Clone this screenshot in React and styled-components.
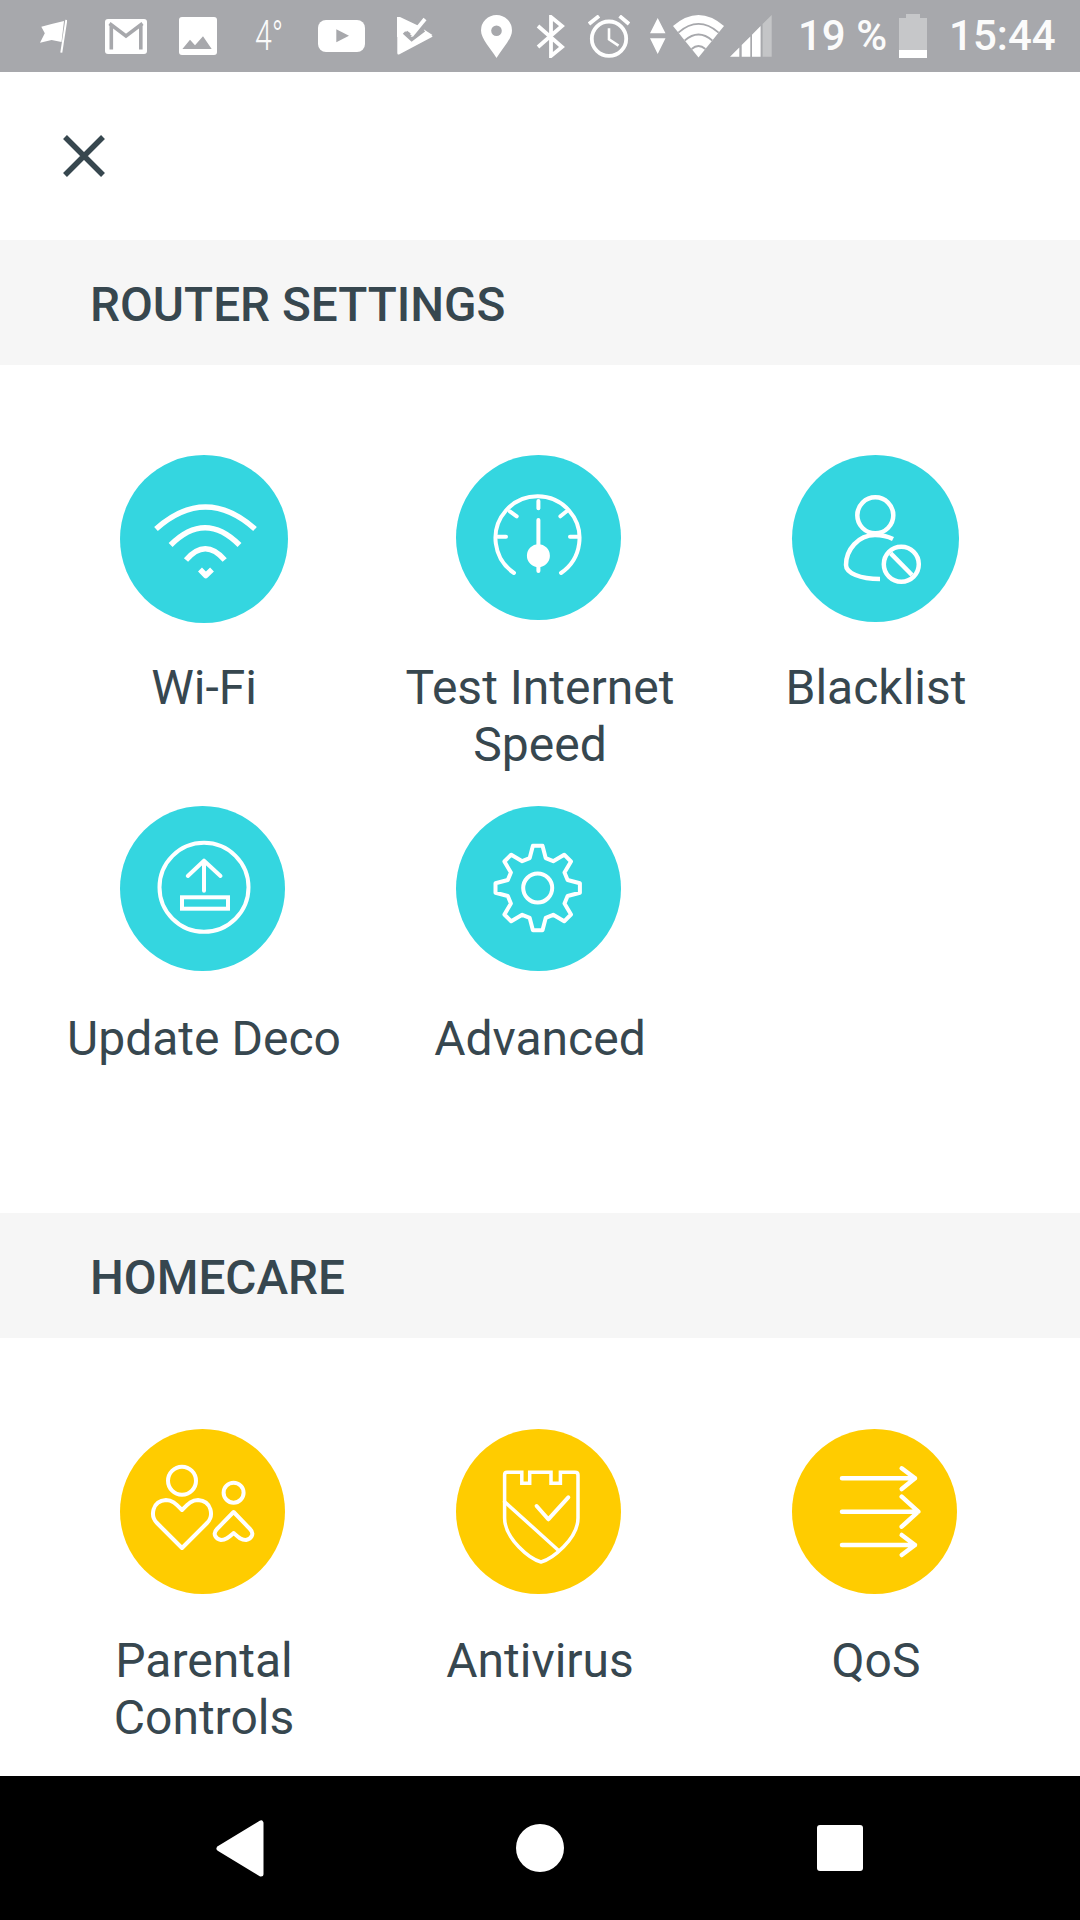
import React from "react";
import styled, { createGlobalStyle } from "styled-components";

const Global = createGlobalStyle`
  html, body { margin: 0; padding: 0; background: #fff; }
  body { font-family: Roboto, "Liberation Sans", sans-serif; }
`;

const Screen = styled.div`
  width: 1080px;
  height: 1920px;
  display: flex;
  flex-direction: column;
  overflow: hidden;
  background: #fff;
  color: #37474f;
`;

const StatusBar = styled.header`
  flex: none;
  height: 72px;
  background: #a7a8ac;
  display: flex;
  align-items: center;
  padding-left: 40px;
  color: #fbfbfb;
`;

const StatusIcon = styled.svg`
  flex: none;
  display: block;
  margin-left: ${(p) => p.$gap || 0}px;
`;

const StatusText = styled.span`
  flex: none;
  margin-left: ${(p) => p.$gap || 0}px;
  font-size: 42px;
  line-height: 72px;
  white-space: pre;
  font-weight: 500;
`;

const Weather = styled.span`
  flex: none;
  width: 28px;
  margin-left: 38px;
  font-size: 42px;
  line-height: 72px;
  font-weight: 300;
  white-space: pre;
  transform: scaleX(0.72);
  transform-origin: left center;
`;

const CloseRow = styled.div`
  flex: none;
  height: 168px;
  display: flex;
  align-items: center;
  padding-left: 63px;
  box-sizing: border-box;
`;

const Main = styled.main`
  flex: 1;
  min-height: 0;
  overflow: hidden;
`;

const SectionHeader = styled.h2`
  margin: 0;
  height: 125px;
  box-sizing: border-box;
  padding: 4px 0 0 90px;
  display: flex;
  align-items: center;
  background: #f6f6f6;
  font-size: 47.7px;
  font-weight: 500;
  color: #37474f;
`;

const Grid = styled.div`
  display: grid;
  grid-template-columns: repeat(3, 336px);
  grid-auto-rows: 351px;
  padding: ${(p) => p.$top}px 0 ${(p) => 146 - p.$top}px 36px;
`;

const Cell = styled.div`
  display: flex;
  flex-direction: column;
  align-items: center;
`;

const CircleSlot = styled.div`
  width: 168px;
  height: 168px;
`;

const Circle = styled.div`
  width: ${(p) => p.$size}px;
  height: ${(p) => p.$size}px;
  border-radius: 50%;
  background: ${(p) => p.$color};
`;

const Glyph = styled.svg`
  display: block;
  width: 100%;
  height: 100%;
  fill: none;
  stroke: #fff;
  stroke-width: 4;
  stroke-linecap: round;
  stroke-linejoin: round;
`;

const Label = styled.div`
  margin-top: ${(p) => p.$offset}px;
  text-align: center;
  font-size: 48px;
  line-height: 57px;
  color: #37474f;
  white-space: pre-line;
`;

const NavBar = styled.nav`
  flex: none;
  height: 144px;
  background: #000;
  display: grid;
  grid-template-columns: repeat(3, 1fr);
`;

const NavSlot = styled.div`
  display: flex;
  align-items: center;
  justify-content: ${(p) => p.$justify || "center"};
  padding: ${(p) => p.$padding || "0"};
`;

const NavHome = styled.div`
  width: 48px;
  height: 48px;
  border-radius: 50%;
  background: #fff;
`;

const NavSquare = styled.div`
  width: 46px;
  height: 46px;
  border-radius: 3px;
  background: #fff;
`;

const G = "#a7a8ac";

const gearPath = () => {
  const cx = 81.7, cy = 82;
  const pts = [];
  for (let i = 0; i < 8; i++) {
    const a = (i * Math.PI) / 4 - Math.PI / 2;
    const d = Math.PI / 180;
    [[31, -15], [42.5, -6.5], [42.5, 6.5], [31, 15]].forEach(([r, o]) => {
      pts.push([cx + r * Math.cos(a + o * d), cy + r * Math.sin(a + o * d)]);
    });
  }
  return "M" + pts.map((p) => p[0].toFixed(1) + " " + p[1].toFixed(1)).join("L") + "Z";
};

const WifiIcon = () => (
  <Glyph viewBox="0 0 168 168" style={{ strokeWidth: 5.5, strokeLinecap: "butt" }}>
    <path d="M36 74Q85.5 30 135 74" />
    <path d="M50.6 90Q85 55.4 119.5 90" />
    <path d="M66 105Q85.3 82.4 104.7 105" />
    <path d="M80 114.5L85.8 120.5L92 114.5" />
  </Glyph>
);

const SpeedIcon = () => (
  <Glyph viewBox="0 0 165 165">
    <path d="M58 118A42 42 0 1 1 105 118" />
    <path d="M82.4 46V53.3M42 81.7H50M114 81.7H122.6M53.8 56.3L60.7 61.3M110.6 56.3L104.4 61.3M82.4 65V116" />
    <circle cx="82.4" cy="100.7" r="9.5" fill="#fff" />
  </Glyph>
);

const BlacklistIcon = () => (
  <Glyph viewBox="0 0 167 167" style={{ strokeWidth: 4.5, strokeLinecap: "butt" }}>
    <circle cx="83.3" cy="60.3" r="18" />
    <path d="M101 84C95 81 89 80 83 80C66 80 54 95 54 110C54 118 68 124 88 124" />
    <circle cx="109.3" cy="109.3" r="17.5" />
    <path d="M98.7 98.3L120 120" />
  </Glyph>
);

const UpdateIcon = () => (
  <Glyph viewBox="0 0 165 165">
    <circle cx="84" cy="81.3" r="44.5" />
    <path d="M84 55.7V84.7M67.8 70L84 54.7L100.5 70" />
    <rect x="62" y="91.3" width="46" height="11.4" strokeLinejoin="miter" />
  </Glyph>
);

const GearIcon = () => (
  <Glyph viewBox="0 0 165 165">
    <path d={gearPath()} />
    <circle cx="81.7" cy="82" r="14.5" />
  </Glyph>
);

const ParentalIcon = () => (
  <Glyph viewBox="0 0 165 165">
    <circle cx="62" cy="51.7" r="14" />
    <path d="M62 119L37 94C30 87 32 72 46 71C52 71 55 74 62 81C69 74 72 71 78 71C92 72 94 87 87 94Z" />
    <circle cx="113.6" cy="63.7" r="10" />
    <path d="M113.6 83L130 100C135 105 131 110 126 111C121 111 118 108 113.6 104C109 108 106 111 101 111C96 110 92 105 97 100Z" />
  </Glyph>
);

const ShieldIcon = () => (
  <Glyph viewBox="0 0 165 165" style={{ strokeWidth: 3.5 }}>
    <path d="M51 43.3H65.8V54.3H73.7V43.3H95V54.3H104.4V43.3H119Q122 43.3 122 46V89C122 110 96 130 85 133C74 130 48.6 110 48.6 89V46Q48.6 43.3 51 43.3Z" strokeLinejoin="miter" />
    <path d="M48.6 72.7L102 121" />
    <path d="M80.6 77L92.3 90.3L112.3 68.3" strokeWidth="4" />
  </Glyph>
);

const QosIcon = () => (
  <Glyph viewBox="0 0 165 165" style={{ strokeWidth: 4.5 }}>
    <path d="M50 49.3H123M109.7 39.3L123 49.3L109.7 60" />
    <path d="M50 82.7H126M109.7 67.7L126.3 82.7L109.7 97.7" />
    <path d="M50 116H123M109.7 106L123 116L109.7 126" />
  </Glyph>
);

const Item = ({ size = 165, color, label, icon, labelOffset = 36 }) => (
  <Cell>
    <CircleSlot>
      <Circle $size={size} $color={color}>{icon}</Circle>
    </CircleSlot>
    <Label $offset={labelOffset}>{label}</Label>
  </Cell>
);

const wifiBands = [0.79, 0.54, 0.27];
const bandPath = (s) =>
  `M${25.5 - 25.5 * s} ${42.5 - 31.5 * s}Q25.5 ${42.5 - 53.5 * s} ${25.5 + 25.5 * s} ${42.5 - 31.5 * s}`;

const CYAN = "#34d6e0";
const YELLOW = "#ffcc00";

export default function App() {
  return (
    <Screen>
      <Global />
      <StatusBar>
        <StatusIcon width="27" height="34" viewBox="0 0 27 34">
          <path d="M24 2L11.6 5L1.3 7.7L4.8 14.3L0 23.7L11.6 21L21.5 23Z" fill="#fff" />
          <path d="M26.3 1L21.3 33.7" stroke="#fff" strokeWidth="2" fill="none" />
        </StatusIcon>
        <StatusIcon $gap={38} width="42" height="35" viewBox="0 0 42 35">
          <rect width="42" height="35" rx="3" fill="#fff" />
          <path d="M4.5 4.5L21 17L37.5 4.5" fill="none" stroke={G} strokeWidth="3.5" />
          <rect x="4.5" y="6" width="3.6" height="24.5" fill={G} />
          <rect x="34" y="6" width="3.6" height="24.5" fill={G} />
        </StatusIcon>
        <StatusIcon $gap={32} width="38" height="38" viewBox="0 0 38 38">
          <rect width="38" height="38" rx="3" fill="#fff" />
          <path d="M3.4 32L11 22.7L16 28.3L24 19.3L32.7 32Z" fill={G} />
        </StatusIcon>
        <Weather>4°</Weather>
        <StatusIcon $gap={35} width="47" height="32" viewBox="0 0 47 32">
          <rect width="47" height="32" rx="8" fill="#fff" />
          <path d="M18.3 9.3L31 15.7L18.3 22.3Z" fill={G} />
        </StatusIcon>
        <StatusIcon $gap={32} width="36" height="38" viewBox="0 0 36 38">
          <path d="M1 .5L35 18.5Q36 19.5 35 20L2 37.5Q.3 38 .3 36V2Q.3 .2 1 .5Z" fill="#fff" />
          <path d="M8 16.5L14.5 23L29 10L36 5V0H20Z" fill={G} />
          <path d="M0 0H3L22 9L20 11L14.5 17L9 13L7 16L14.5 23L27 12.5L35.5 18L0 20Z" fill="#fff" />
          <path d="M7 15.5L14.7 22.5L27 13" fill="none" stroke={G} strokeWidth="3.6" />
          <path d="M14.5 18.5L28 2" fill="none" stroke="#fff" strokeWidth="3.8" />
        </StatusIcon>
        <StatusIcon $gap={48} width="31" height="43" viewBox="0 0 31 43">
          <path d="M15.5 43C10 34 0 24 0 15.5A15.5 15.5 0 0 1 31 15.5C31 24 21 34 15.5 43Z" fill="#fff" />
          <circle cx="15.5" cy="15.7" r="5.3" fill={G} />
        </StatusIcon>
        <StatusIcon $gap={24} width="29" height="43" viewBox="0 0 29 43">
          <path d="M2 11L26 32L15 41V2L26 11L2 32" fill="none" stroke="#fff" strokeWidth="3.8" />
        </StatusIcon>
        <StatusIcon $gap={23} width="42" height="43" viewBox="0 0 42 43" fill="none" stroke="#fff" strokeWidth="3.8">
          <circle cx="21" cy="23.7" r="17.2" />
          <path d="M21 13.3V24.3L30.5 30.7" strokeWidth="2.6" />
          <path d="M1 9L11 1M31.6 1L41 9" />
        </StatusIcon>
        <StatusIcon $gap={20} width="16" height="36" viewBox="0 0 16 36">
          <path d="M7.7 0L15.5 15.3H0Z M0 20.3H15.5L7.7 36Z" fill="#fff" />
        </StatusIcon>
        <StatusIcon $gap={7} width="51" height="43" viewBox="0 0 51 43">
          <path d="M25.5 42.5L0 11Q25.5 -11 51 11Z" fill="#fff" />
          {wifiBands.map((s) => (
            <path key={s} d={bandPath(s)} fill="none" stroke={G} strokeWidth="1.8" />
          ))}
        </StatusIcon>
        <StatusIcon $gap={6} width="42" height="42" viewBox="0 0 42 42">
          <path d="M0 41.7H9.3V32.4Z M11.7 41.7H20.3V21.4L11.7 30Z M22 41.7H30.6V11L22 19.7Z" fill="#fff" />
          <path d="M32.6 41.7H41.7V0L32.6 9Z" fill="#c4c5c7" />
        </StatusIcon>
        <StatusText $gap={26}>19 %</StatusText>
        <StatusIcon $gap={12} width="28" height="44" viewBox="0 0 28 44">
          <path d="M7 0H21V4H28V36H0V4H7Z" fill="#c6c7c9" />
          <rect y="36" width="28" height="8" fill="#fff" />
        </StatusIcon>
        <StatusText $gap={22}>15:44</StatusText>
      </StatusBar>

      <CloseRow>
        <svg width="42" height="42" viewBox="0 0 42 42" fill="none" stroke="#37474f" strokeWidth="5.5">
          <path d="M2 2L40 40M40 2L2 40" />
        </svg>
      </CloseRow>

      <Main>
        <SectionHeader>ROUTER SETTINGS</SectionHeader>
        <Grid $top={90}>
          <Item size={168} color={CYAN} label="Wi-Fi" icon={<WifiIcon />} />
          <Item color={CYAN} label={"Test Internet\nSpeed"} icon={<SpeedIcon />} />
          <Item size={167} color={CYAN} label="Blacklist" icon={<BlacklistIcon />} />
          <Item color={CYAN} label="Update Deco" icon={<UpdateIcon />} />
          <Item color={CYAN} label="Advanced" icon={<GearIcon />} />
        </Grid>
        <SectionHeader>HOMECARE</SectionHeader>
        <Grid $top={91}>
          <Item labelOffset={35} color={YELLOW} label={"Parental\nControls"} icon={<ParentalIcon />} />
          <Item labelOffset={35} color={YELLOW} label="Antivirus" icon={<ShieldIcon />} />
          <Item labelOffset={35} color={YELLOW} label="QoS" icon={<QosIcon />} />
        </Grid>
      </Main>

      <NavBar>
        <NavSlot $justify="flex-start" $padding="0 0 0 216px">
          <svg width="49" height="57" viewBox="0 0 49 57">
            <path d="M3 28.5L45 3V54Z" fill="#fff" stroke="#fff" strokeWidth="5" strokeLinejoin="round" />
          </svg>
        </NavSlot>
        <NavSlot>
          <NavHome />
        </NavSlot>
        <NavSlot $justify="flex-end" $padding="0 217px 0 0">
          <NavSquare />
        </NavSlot>
      </NavBar>
    </Screen>
  );
}
